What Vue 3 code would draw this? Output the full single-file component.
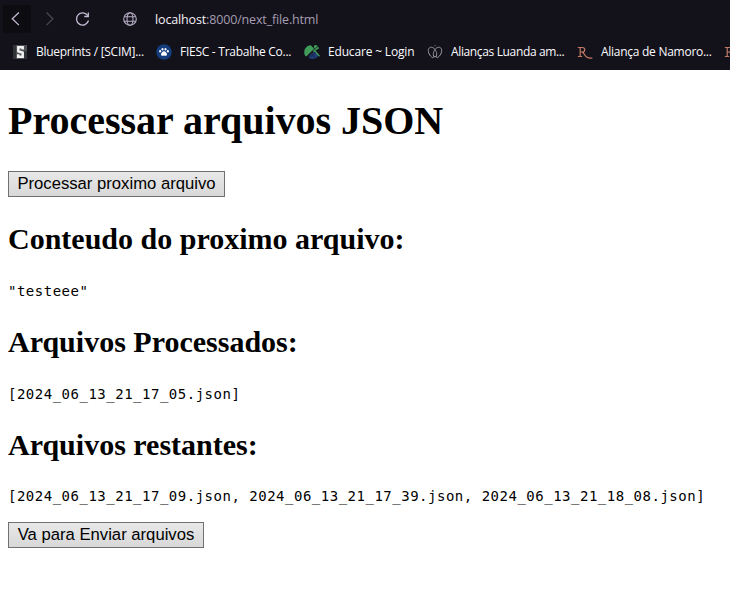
<script setup>
const bookmarks = [
  { icon: 'scim', label: 'Blueprints / [SCIM]...', kind: 'tight' },
  { icon: 'paw', label: 'FIESC - Trabalhe Co...', kind: 'tight' },
  { icon: 'leaf', label: 'Educare ~ Login', kind: 'normal' },
  { icon: 'rings', label: 'Alianças Luanda am...', kind: 'tighter' },
  { icon: 'r', label: 'Aliança de Namoro...', kind: 'tight' },
  { icon: 'r', label: '', kind: 'normal' },
]
const sections = [
  { title: 'Conteudo do proximo arquivo:', body: '"testeee"' },
  { title: 'Arquivos Processados:', body: '[2024_06_13_21_17_05.json]' },
  {
    title: 'Arquivos restantes:',
    body: '[2024_06_13_21_17_09.json, 2024_06_13_21_17_39.json, 2024_06_13_21_18_08.json]',
  },
]
</script>

<template>
  <div class="window">
    <header class="chrome">
      <div class="toolbar">
        <span class="nav back">
          <svg width="28" height="28" viewBox="0 0 28 28"><path d="M15.900 7.500 9.300 13.800l6.600 6.300" /></svg>
        </span>
        <span class="nav forward">
          <svg width="28" height="28" viewBox="0 0 28 28"><path d="M10.500 7.500 16.900 13.800 10.500 20.100" /></svg>
        </span>
        <span class="nav reload">
          <svg width="28" height="28" viewBox="0 0 28 28">
            <path d="M18.600 10.500A6.100 6.100 0 1 0 19.500 15.500M19.300 7.500v4h-4" />
          </svg>
        </span>
        <svg class="globe" width="14" height="14" viewBox="0 0 14 14">
          <circle cx="7" cy="7" r="6.3" />
          <ellipse cx="7" cy="7" rx="3" ry="6.3" />
          <path d="M1.2 4.8h11.6M1.2 9.2h11.6" />
        </svg>
        <span class="url"><b>localhost</b>:8000/next_file.html</span>
      </div>
      <nav class="bookmarks">
        <a v-for="(b, i) in bookmarks" :key="i" class="bookmark" :class="b.kind">
          <svg v-if="b.icon === 'scim'" width="16" height="16" viewBox="0 0 16 16">
            <path fill="#4b5154" d="M1 1h14v14H1z" />
            <path fill="#303437" d="M1 1h3v14H1zM12 7h3v8h-3z" />
            <path fill="none" stroke="#f1f1f1" stroke-width="2.5" d="M10.700 5.600V3.300H6.300v4l4.400 1.400v4H6.200V10.300" />
          </svg>
          <svg v-else-if="b.icon === 'paw'" width="16" height="16" viewBox="0 0 16 16">
            <circle cx="8" cy="8" r="7.8" fill="#143d7b" />
            <g fill="#fff">
              <ellipse cx="4.1" cy="7.3" rx="1" ry="1.2" />
              <ellipse cx="6.5" cy="5.2" rx="1" ry="1.300" />
              <ellipse cx="9.5" cy="5.2" rx="1" ry="1.300" />
              <ellipse cx="11.900" cy="7.3" rx="1" ry="1.2" />
              <path d="M8 7.2c1.5 0 3 2.100 3 3.200 0 1.500-1.700 1.500-3 1.100-1.300.4-3 .4-3-1.100C5 9.300 6.500 7.200 8 7.200z" />
            </g>
          </svg>
          <svg v-else-if="b.icon === 'leaf'" width="16" height="16" viewBox="0 0 16 16">
            <path fill="#409c58" d="M.3 9C0 4.500 3 1.300 7 1.300l2.500 4.500-7 7C.9 12 .4 10.800.3 9z" />
            <circle cx="11.700" cy="2.900" r="2" fill="#409c58" />
            <path fill="#203d78" d="M4.500 13.500c1-2.800 4-5.200 6.400-6L14.500 11c-1.300 3.700-5.700 5.500-10 2.500z" />
            <path fill="none" stroke="#409c58" stroke-width="1.400" d="m7 2.500 8.500 9.700" />
            <path fill="none" stroke="#409c58" stroke-width="1.300" d="M9 7.500 14.800 3.600" />
            <path fill="none" stroke="#15131b" stroke-width=".7" d="M1.500 13.500C5 10 9 6.300 13 2.800" />
            <path fill="none" stroke="#15131b" stroke-width=".5" d="m7.500 10 4 4M6 13l5.500-4.500" />
          </svg>
          <svg v-else-if="b.icon === 'rings'" width="16" height="16" viewBox="0 0 16 16">
            <g fill="none" stroke="#99989d" stroke-width="1">
              <path d="M5.600 13.700C2.700 12 .8 8.300 1.400 5.500 1.900 3 5 2.500 6.900 4.300 9.300 6.700 10.800 10.500 8.700 13" />
              <path d="M10.400 13.700c2.900-1.700 4.800-5.400 4.200-8.200C14.100 3 11 2.500 9.100 4.300 6.700 6.700 5.200 10.500 7.300 13" />
              <path d="M5.600 13.700 8 12.300l2.400 1.400" />
            </g>
            <path fill="#777" d="M7.500 1h1v1.300h-1z" />
          </svg>
          <svg v-else width="16" height="16" viewBox="0 0 16 16">
            <path fill="none" stroke="#c07a64" stroke-width="1.200" d="M.8 3.500h4.500c3.300 0 3.300 4.500 0 4.500H3.500M3.200 3.500v9M.8 12.500h4.400M5.500 8c2.500 2.500 3.500 7.200 9.900 6" />
          </svg>
          <span v-if="b.label" class="label">{{ b.label }}</span>
        </a>
      </nav>
    </header>
    <main class="page">
      <h1>Processar arquivos JSON</h1>
      <button class="process">Processar proximo arquivo</button>
      <section v-for="s in sections" :key="s.title">
        <h2>{{ s.title }}</h2>
        <pre>{{ s.body }}</pre>
      </section>
      <button class="send">Va para Enviar arquivos</button>
    </main>
  </div>
</template>

<style>
body {
  margin: 0;
  background: #fff;
}
</style>

<style scoped>
.window {
  width: 730px;
  height: 590px;
  overflow: hidden;
  background: #fff;
}
.chrome {
  height: 70px;
  box-sizing: border-box;
  padding-top: 5px;
  background: #13111a;
  overflow: hidden;
  font-family: "Open Sans", "Noto Sans", sans-serif;
}
.toolbar {
  display: flex;
  align-items: center;
  height: 28px;
  padding-left: 3px;
}
.nav {
  width: 28px;
  height: 28px;
  margin-right: 5px;
}
.nav svg {
  display: block;
  fill: none;
  stroke: #c4bad4;
  stroke-width: 1.3;
}
.back {
  background: #0d0c10;
}
.forward svg {
  stroke: #4b4653;
}
.globe {
  margin-left: 21px;
  margin-right: 18px;
  fill: none;
  stroke: #b5acc4;
  stroke-width: 1.1;
}
.url {
  font-size: 12.5px;
  color: #a59eb2;
  white-space: nowrap;
  letter-spacing: -0.15px;
}
.url b {
  font-weight: 400;
  color: #f3f1f6;
}
.bookmarks {
  display: grid;
  grid-template-columns: 144px 148px 123px 150px 147px 16px;
  align-items: center;
  height: 37px;
  padding-left: 12px;
}
.bookmark {
  display: flex;
  align-items: center;
  gap: 8px;
  height: 18px;
}
.bookmark svg {
  flex: none;
}
.label {
  font-size: 12px;
  line-height: 18px;
  color: #fbfbfe;
  white-space: nowrap;
  letter-spacing: -0.17px;
}
.tight .label {
  letter-spacing: -0.27px;
}
.tighter .label {
  letter-spacing: -0.36px;
}
.page {
  padding: 0 8px;
  color: #000;
}
h1,
h2 {
  font-family: "Liberation Serif", serif;
  font-weight: 700;
}
h1 {
  margin: 0;
  padding-top: 28px;
  font-size: 40px;
  line-height: 46px;
  letter-spacing: -0.015px;
}
h2 {
  margin: 0;
  font-size: 30px;
  line-height: 34px;
}
pre {
  margin: 26px 0 24px;
  font-family: "DejaVu Sans Mono", monospace;
  font-size: 14px;
  line-height: 19px;
  letter-spacing: 0.508px;
}
section:last-of-type pre {
  margin: 25px 0 16px;
}
button {
  display: block;
  height: 26px;
  box-sizing: border-box;
  padding: 0 0 1px;
  border: 1px solid #707070;
  border-radius: 0;
  background: linear-gradient(#e8e8e8, #d8d8d8);
  color: #000;
  font: 16.67px/23px "Liberation Sans", Arial, sans-serif;
  text-align: center;
  white-space: nowrap;
}
.process {
  width: 217px;
  margin: 27px 0 25px;
}
.send {
  width: 196px;
}
</style>
